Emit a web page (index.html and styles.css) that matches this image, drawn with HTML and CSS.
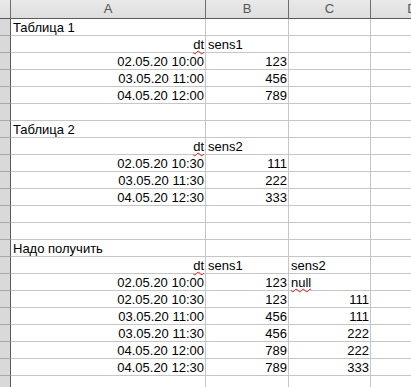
FILE: index.html
```html
<!DOCTYPE html>
<html>
<head>
<meta charset="utf-8">
<link rel="stylesheet" href="styles.css">
</head>
<body>
<div class="sheet">
  <div class="corner"></div><div class="colh">A</div><div class="colh">B</div><div class="colh">C</div><div class="colh last">D</div>

  <div class="rowh"></div><div class="c">Таблица 1</div><div class="c"></div><div class="c"></div><div class="c"></div>
  <div class="rowh"></div><div class="c r"><span class="sp">dt</span></div><div class="c">sens1</div><div class="c"></div><div class="c"></div>
  <div class="rowh"></div><div class="c r">02.05.20 10:00</div><div class="c r">123</div><div class="c"></div><div class="c"></div>
  <div class="rowh"></div><div class="c r">03.05.20 11:00</div><div class="c r">456</div><div class="c"></div><div class="c"></div>
  <div class="rowh"></div><div class="c r">04.05.20 12:00</div><div class="c r">789</div><div class="c"></div><div class="c"></div>
  <div class="rowh"></div><div class="c"></div><div class="c"></div><div class="c"></div><div class="c"></div>

  <div class="rowh"></div><div class="c">Таблица 2</div><div class="c"></div><div class="c"></div><div class="c"></div>
  <div class="rowh"></div><div class="c r"><span class="sp">dt</span></div><div class="c">sens2</div><div class="c"></div><div class="c"></div>
  <div class="rowh"></div><div class="c r">02.05.20 10:30</div><div class="c r">111</div><div class="c"></div><div class="c"></div>
  <div class="rowh"></div><div class="c r">03.05.20 11:30</div><div class="c r">222</div><div class="c"></div><div class="c"></div>
  <div class="rowh"></div><div class="c r">04.05.20 12:30</div><div class="c r">333</div><div class="c"></div><div class="c"></div>
  <div class="rowh"></div><div class="c"></div><div class="c"></div><div class="c"></div><div class="c"></div>
  <div class="rowh"></div><div class="c"></div><div class="c"></div><div class="c"></div><div class="c"></div>

  <div class="rowh"></div><div class="c">Надо получить</div><div class="c"></div><div class="c"></div><div class="c"></div>
  <div class="rowh"></div><div class="c r"><span class="sp">dt</span></div><div class="c">sens1</div><div class="c">sens2</div><div class="c"></div>
  <div class="rowh"></div><div class="c r">02.05.20 10:00</div><div class="c r">123</div><div class="c"><span class="sp">null</span></div><div class="c"></div>
  <div class="rowh"></div><div class="c r">02.05.20 10:30</div><div class="c r">123</div><div class="c r">111</div><div class="c"></div>
  <div class="rowh"></div><div class="c r">03.05.20 11:00</div><div class="c r">456</div><div class="c r">111</div><div class="c"></div>
  <div class="rowh"></div><div class="c r">03.05.20 11:30</div><div class="c r">456</div><div class="c r">222</div><div class="c"></div>
  <div class="rowh"></div><div class="c r">04.05.20 12:00</div><div class="c r">789</div><div class="c r">222</div><div class="c"></div>
  <div class="rowh"></div><div class="c r">04.05.20 12:30</div><div class="c r">789</div><div class="c r">333</div><div class="c"></div>
  <div class="rowh"></div><div class="c"></div><div class="c"></div><div class="c"></div><div class="c"></div>
</div>
</body>
</html>
```

FILE: styles.css
```css
html, body {
  margin: 0;
  padding: 0;
  background: #ffffff;
  overflow: hidden;
}
.sheet {
  display: grid;
  grid-template-columns: 11px 195px 83px 82px 82px;
  grid-template-rows: 19px;
  grid-auto-rows: 17px;
  font-family: "Liberation Sans", Arial, sans-serif;
  font-size: 13px;
  color: #000;
  width: 453px;
}
.corner, .colh {
  box-sizing: border-box;
  background: linear-gradient(#e9e9e9, #dedede);
  border-right: 1px solid #6e6e6e;
  border-bottom: 1px solid #5a5a5a;
}
.colh {
  text-align: center;
  color: #555;
  line-height: 18px;
}
.colh.last {
  border-right: none;
}
.rowh {
  box-sizing: border-box;
  background: #d9d9d9;
  border-right: 1px solid #5a5a5a;
  border-bottom: 1px solid #a8a8a8;
}
.c {
  box-sizing: border-box;
  border-right: 1px solid #c6c6c6;
  border-bottom: 1px solid #c6c6c6;
  padding: 0 1px 0 2px;
  line-height: 17px;
  white-space: nowrap;
}
.r {
  text-align: right;
}
.sp {
  text-decoration-line: underline;
  text-decoration-style: wavy;
  text-decoration-color: #e02020;
  text-decoration-thickness: 1px;
  text-underline-offset: 1px;
  text-decoration-skip-ink: none;
}
```
